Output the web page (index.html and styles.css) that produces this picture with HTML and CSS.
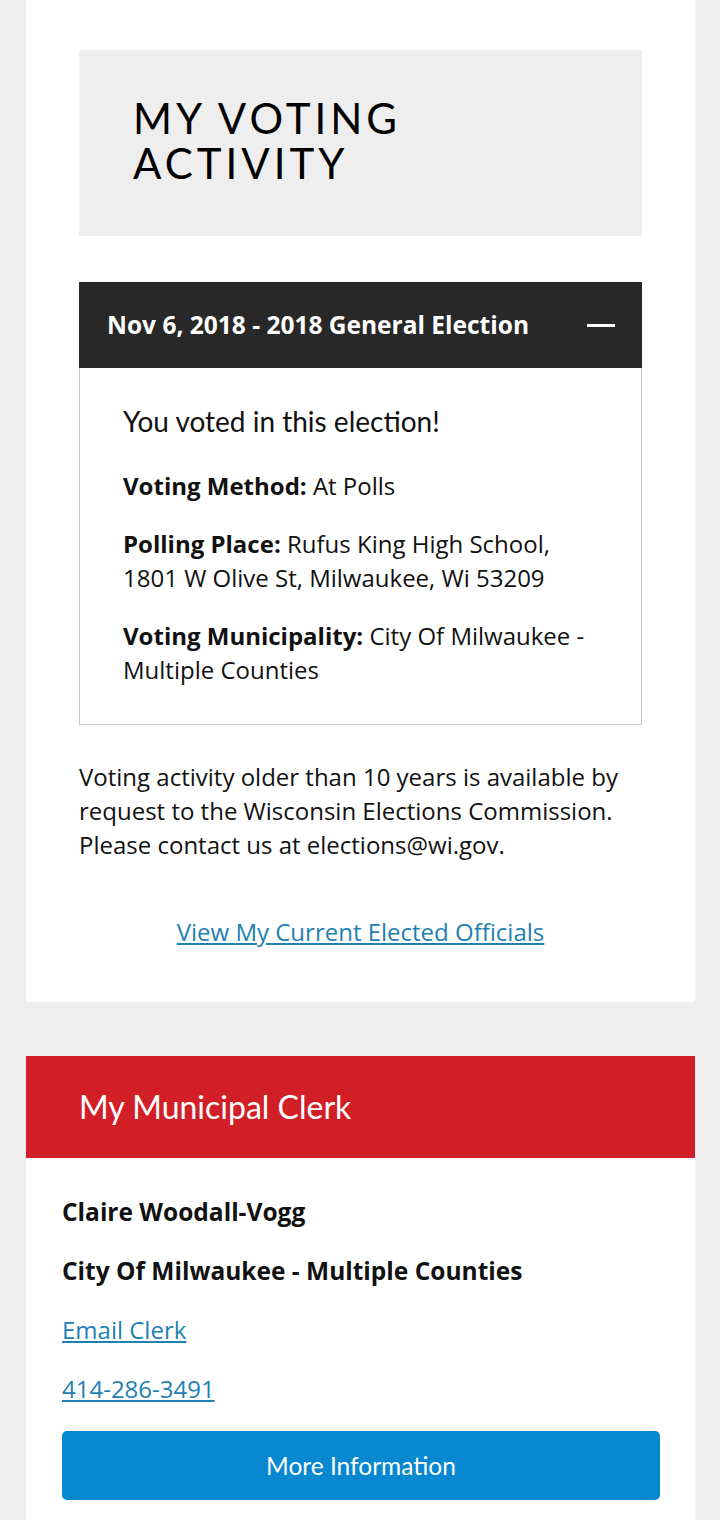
FILE: index.html
```html
<!DOCTYPE html>
<html lang="en">
  <head>
    <meta charset="UTF-8" />
    <title>My Voter Info</title>
    <link rel="stylesheet" href="styles.css">
  </head>
  <body>
    <!-- Voting activity card -->
    <section class="card activity">
      <div class="page-title">
        <h1>My Voting Activity</h1>
      </div>

      <div class="accordion">
        <div class="accordion-head">
          <span class="accordion-title">Nov 6, 2018 - 2018 General Election</span>
          <span class="accordion-toggle"></span>
        </div>
        <div class="accordion-body">
          <p class="voted">You voted in this election!</p>
          <p><b>Voting Method:</b> At Polls</p>
          <p><b>Polling Place:</b> Rufus King High School, 1801 W Olive St, Milwaukee, Wi 53209</p>
          <p><b>Voting Municipality:</b> City Of Milwaukee - Multiple Counties</p>
        </div>
      </div>

      <p class="note">Voting activity older than 10 years is available by request to the Wisconsin Elections Commission. Please contact us at elections@wi.gov.</p>

      <div class="officials">
        <a href="#">View My Current Elected Officials</a>
      </div>
    </section>

    <!-- Municipal clerk card -->
    <section class="card clerk">
      <h2 class="clerk-head">My Municipal Clerk</h2>
      <div class="clerk-body">
        <p class="strong">Claire Woodall-Vogg</p>
        <p class="strong">City Of Milwaukee - Multiple Counties</p>
        <p><a href="#">Email Clerk</a></p>
        <p><a href="#">414-286-3491</a></p>
        <button class="more-btn">More Information</button>
      </div>
    </section>
  </body>
</html>
```

FILE: styles.css
```css
/* Global */
:root {
  --page-bg: #eeeeee;
  --dark: #282828;
  --red: #d21f27;
  --blue: #0788d0;
  --link: #1f80b4;
  --body-font: 'Open Sans', sans-serif;
  --display-font: 'Lato', sans-serif;
}

* {
  margin: 0;
  padding: 0;
  box-sizing: border-box;
}

body {
  background: var(--page-bg);
  font-family: var(--body-font);
  color: #111;
  font-size: 24px;
  line-height: 34px;
}

a {
  color: var(--link);
}

.card {
  background: #ffffff;
  margin: 0 25px 0 26px;
}

/* Voting activity */
.activity {
  padding: 50px 53px 53px;
}

.page-title {
  background: var(--page-bg);
  height: 186px;
  padding: 46px 54px 0;
}

.page-title h1 {
  font-family: var(--display-font);
  font-weight: 400;
  font-size: 42px;
  line-height: 45px;
  letter-spacing: 4px;
  text-transform: uppercase;
  color: #000;
}

.accordion {
  margin-top: 46px;
}

.accordion-head {
  display: flex;
  align-items: center;
  justify-content: space-between;
  height: 86px;
  padding: 0 27px 0 28px;
  background: var(--dark);
  color: #fff;
}

.accordion-title {
  font-weight: 700;
  font-size: 24.5px;
}

.accordion-toggle {
  width: 28px;
  height: 3px;
  background: #fff;
}

.accordion-body {
  border: 1px solid #c8c8c8;
  border-top: none;
  padding: 36px 43px 37px;
}

.accordion-body p + p {
  margin-top: 24px;
}

.accordion-body .voted {
  font-family: var(--display-font);
  font-size: 28px;
  margin-bottom: 31px;
}

.accordion-body .voted + p {
  margin-top: 0;
}

.note {
  margin-top: 35px;
}

.officials {
  text-align: center;
  margin-top: 53px;
}

/* Municipal clerk */
.clerk {
  margin-top: 54px;
}

.clerk-head {
  background: var(--red);
  color: #fff;
  font-family: var(--display-font);
  font-weight: 400;
  font-size: 32px;
  height: 102px;
  line-height: 102px;
  padding-left: 53px;
}

.clerk-body {
  padding: 37px 35px 30px 36px;
}

.clerk-body p + p {
  margin-top: 25px;
}

.strong {
  font-weight: 700;
  font-size: 24.5px;
}

.more-btn {
  display: block;
  width: 100%;
  height: 69px;
  margin-top: 25px;
  border: none;
  border-radius: 5px;
  background: var(--blue);
  color: #fff;
  font-family: var(--display-font);
  font-size: 24.5px;
  cursor: pointer;
}
```
